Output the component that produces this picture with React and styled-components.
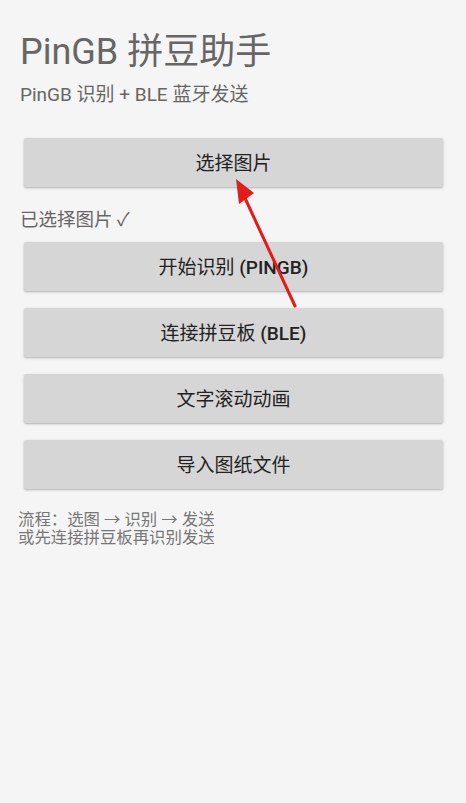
import React from 'react';
import styled, { createGlobalStyle } from 'styled-components';

const GlobalStyle = createGlobalStyle`
  html, body {
    margin: 0;
    padding: 0;
    background: #f5f5f5;
  }
  * {
    box-sizing: border-box;
  }
`;

const Screen = styled.main`
  position: relative;
  min-height: 100vh;
  padding: 30px 20px 0;
  background: #f5f5f5;
  font-family: Roboto, "Noto Sans CJK SC", sans-serif;
  color: #666;
  overflow: hidden;
`;

const Title = styled.h1`
  margin: 0;
  font-size: 36px;
  line-height: 44px;
  font-weight: 400;
  color: #666;
`;

const Subtitle = styled.p`
  margin: 9px 0 0;
  font-size: 19px;
  line-height: 24px;
  color: #666;
`;

const Actions = styled.section`
  display: flex;
  flex-direction: column;
  gap: 17px;
  padding: 0 3px 0 4px;
  margin-top: ${p => p.top}px;
`;

const Button = styled.button`
  height: 49px;
  width: 100%;
  border: none;
  border-radius: 2px;
  background: #d6d6d6;
  box-shadow: 0 1px 3px rgba(0, 0, 0, 0.22), 0 1px 1px rgba(0, 0, 0, 0.08);
  font-family: inherit;
  font-size: 19px;
  font-weight: 400;
  color: #222;
  padding: 0 0 2px;
  cursor: pointer;
`;

const Latin = styled.span`
  font-family: Roboto, sans-serif;
  font-weight: 500;
`;

const Status = styled.p`
  margin: 21px 0 0;
  font-size: 18.5px;
  line-height: 24px;
  color: #666;
`;

const Hint = styled.p`
  margin: 22px 0 0 -2px;
  font-size: 16.4px;
  line-height: 18px;
  color: #777;
`;

const Annotation = styled.svg`
  position: absolute;
  left: 0;
  top: 0;
  width: 466px;
  height: 803px;
  pointer-events: none;
`;

const Arrow = () => (
  <Annotation viewBox="0 0 466 803">
    <line x1="295" y1="306" x2="244" y2="196" stroke="#e31b1b" strokeWidth="3" strokeLinecap="round" />
    <polygon points="236,179 254,193 239,204" fill="#e31b1b" />
  </Annotation>
);

export default function App() {
  return (
    <>
      <GlobalStyle />
      <Screen>
        <Title>PinGB 拼豆助手</Title>
        <Subtitle>PinGB 识别 + BLE 蓝牙发送</Subtitle>
        <Actions top={31}>
          <Button>选择图片</Button>
        </Actions>
        <Status>已选择图片 ✓</Status>
        <Actions top={10}>
          <Button>开始识别 <Latin>(PINGB)</Latin></Button>
          <Button>连接拼豆板 <Latin>(BLE)</Latin></Button>
          <Button>文字滚动动画</Button>
          <Button>导入图纸文件</Button>
        </Actions>
        <Hint>
          流程：选图 → 识别 → 发送
          <br />
          或先连接拼豆板再识别发送
        </Hint>
        <Arrow />
      </Screen>
    </>
  );
}
